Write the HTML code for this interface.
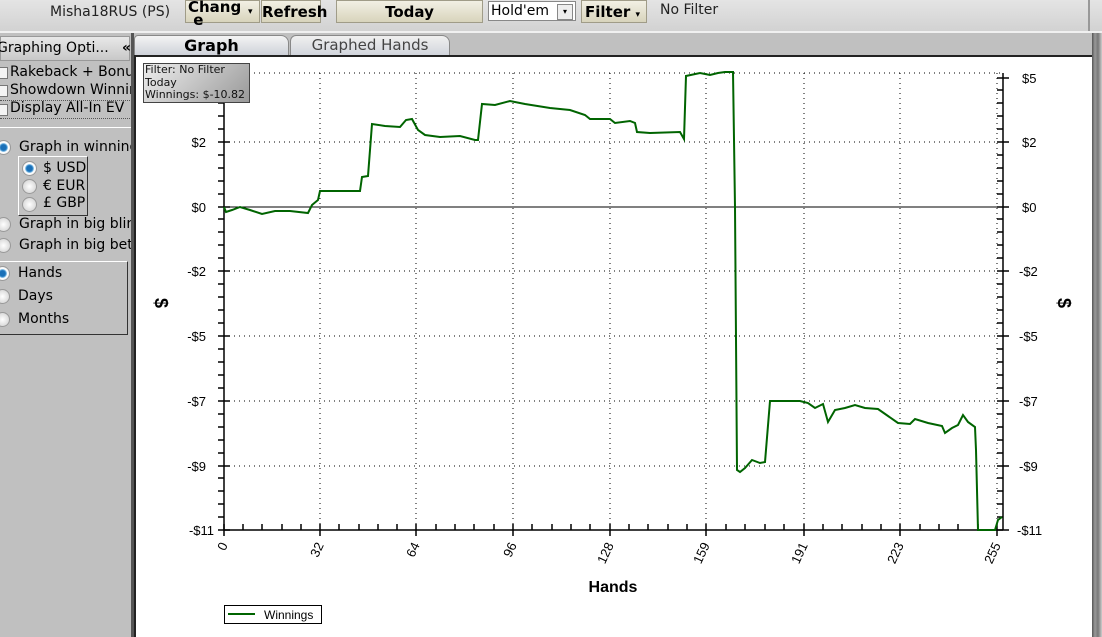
<!DOCTYPE html>
<html><head><meta charset="utf-8"><style>
body{margin:0;width:1102px;height:637px;overflow:hidden;background:#c0c0c0;font-family:"DejaVu Sans","Liberation Sans",sans-serif;position:relative}
.a{position:absolute}
.btn{position:absolute;top:0;height:23px;background:linear-gradient(#f2f0e4,#d8d4bc);border:1px solid #a09c88;font-weight:bold;font-size:15px;text-align:center;line-height:23px;color:#000;box-sizing:border-box}
.t{position:absolute;font-size:14px;color:#000;white-space:nowrap}
.rb{position:absolute;width:15px;height:15px;border-radius:50%;background:radial-gradient(#fff,#ccc);border:1px solid #999;box-sizing:border-box}
.rb.on{background:radial-gradient(#1a70b8 30%,#6ab0e0 42%,#fff 52%,#ddd)}
.cb{position:absolute;width:10px;height:10px;border:1px solid #777;background:#f4f4f4}
</style></head><body>
<div class="a" style="left:0;top:0;width:1102px;height:31px;background:linear-gradient(#e4e4e4,#d2d2d2)"></div>
<div class="t" style="left:50px;top:4px;color:#222">Misha18RUS (PS)</div>
<div class="btn" style="left:185px;width:75px;line-height:13px;text-align:left;padding-left:2px">Chang<br>&nbsp;e<span style="position:absolute;left:62px;top:5px;font-size:9px">▾</span></div>
<div class="btn" style="left:261px;width:60px">Refresh</div>
<div class="btn" style="left:336px;width:147px">Today</div>
<div class="a" style="left:488px;top:1px;width:88px;height:20px;background:#fff;border:1px solid #888;box-sizing:border-box;font-size:14px;line-height:18px;padding-left:2px">Hold'em<span style="position:absolute;right:2px;top:2px;width:14px;height:14px;border:1px solid #888;background:#eee;font-size:8px;line-height:14px;text-align:center">▾</span></div>
<div class="btn" style="left:581px;width:66px;text-align:left;padding-left:3px">Filter <span style="font-size:9px">▾</span></div>
<div class="t" style="left:660px;top:2px;color:#222">No Filter</div>
<div class="a" style="left:1088px;top:0;width:2px;height:31px;background:#999"></div>
<div class="a" style="left:0;top:31px;width:1102px;height:2px;background:#f0f0f0"></div>
<!-- left panel -->
<div class="a" style="left:0;top:36px;width:130px;height:25px;background:linear-gradient(#e8e8e8,#c8c8c8);border:1px solid #999;box-sizing:border-box"></div>
<div class="t" style="left:-3px;top:40px">Graphing Opti...&nbsp;&nbsp; <b>«</b></div>
<div class="cb" style="left:-4px;top:67px"></div><div class="t" style="left:10px;top:64px">Rakeback + Bonus</div>
<div class="cb" style="left:-4px;top:85px"></div><div class="t" style="left:10px;top:82px">Showdown Winnings</div>
<div class="a" style="left:0;top:100px;width:132px;border-top:1px dotted #555"></div>
<div class="cb" style="left:-4px;top:104px"></div><div class="t" style="left:10px;top:100px">Display All-In EV</div>
<div class="a" style="left:0;top:118px;width:132px;border-top:1px dotted #555"></div>
<div class="a" style="left:0;top:127px;width:132px;height:1px;background:#fff"></div>
<div class="rb on" style="left:-4px;top:140px"></div><div class="t" style="left:19px;top:139px">Graph in winnings</div>
<div class="a" style="left:18px;top:156px;width:68px;height:58px;border:1px solid #fff;border-right-color:#333;border-bottom-color:#333"></div>
<div class="rb on" style="left:22px;top:161px"></div><div class="t" style="left:43px;top:160px">$ USD</div>
<div class="rb" style="left:22px;top:179px"></div><div class="t" style="left:43px;top:178px">€ EUR</div>
<div class="rb" style="left:22px;top:197px"></div><div class="t" style="left:43px;top:195px">£ GBP</div>
<div class="rb" style="left:-4px;top:217px"></div><div class="t" style="left:19px;top:216px">Graph in big blinds</div>
<div class="rb" style="left:-4px;top:238px"></div><div class="t" style="left:19px;top:237px">Graph in big bets</div>
<div class="a" style="left:-2px;top:261px;width:128px;height:72px;border:1px solid #fff;border-right-color:#333;border-bottom-color:#333"></div>
<div class="rb on" style="left:-5px;top:266px"></div><div class="t" style="left:18px;top:265px">Hands</div>
<div class="rb" style="left:-5px;top:289px"></div><div class="t" style="left:18px;top:288px">Days</div>
<div class="rb" style="left:-5px;top:312px"></div><div class="t" style="left:18px;top:311px">Months</div>
<div class="a" style="left:131px;top:33px;width:3px;height:604px;background:#555"></div>
<!-- tabs -->
<div class="a" style="left:134px;top:35px;width:155px;height:21px;background:linear-gradient(#f4f4f4,#ccd0d8);border:1px solid #888;border-bottom:none;border-radius:4px 8px 0 0;box-sizing:border-box;text-align:center;font-weight:bold;font-size:16px;line-height:19px">Graph</div>
<div class="a" style="left:290px;top:35px;width:160px;height:21px;background:linear-gradient(#f0f0f0,#d0d4dc);border:1px solid #888;border-bottom:none;border-radius:6px 8px 0 0;box-sizing:border-box;text-align:center;font-size:15px;line-height:19px;color:#444">Graphed Hands</div>
<div class="a" style="left:134px;top:55px;width:960px;height:582px;background:#fff;border-top:2px solid #222;border-left:2px solid #222;box-sizing:border-box"></div>
<div class="a" style="left:1092px;top:33px;width:10px;height:604px;background:linear-gradient(90deg,#555,#999 30%,#777 60%,#ccc)"></div>
<svg class="a" style="left:0;top:0" width="1102" height="637" font-family="Liberation Sans,sans-serif">
<g stroke="#000" stroke-dasharray="1,4" stroke-width="1">
<line x1="224" y1="73" x2="1003" y2="73"/><line x1="224" y1="142" x2="1003" y2="142"/>
<line x1="224" y1="271" x2="1003" y2="271"/><line x1="224" y1="336" x2="1003" y2="336"/><line x1="224" y1="401" x2="1003" y2="401"/><line x1="224" y1="466" x2="1003" y2="466"/>
<line x1="320" y1="73" x2="320" y2="530"/><line x1="416" y1="73" x2="416" y2="530"/><line x1="513" y1="73" x2="513" y2="530"/><line x1="610" y1="73" x2="610" y2="530"/><line x1="706" y1="73" x2="706" y2="530"/><line x1="804" y1="73" x2="804" y2="530"/><line x1="900" y1="73" x2="900" y2="530"/><line x1="997" y1="73" x2="997" y2="530"/>
</g>
<g stroke="#000" stroke-width="1.5" fill="none">
<line x1="224" y1="73" x2="224" y2="530"/><line x1="1003" y1="73" x2="1003" y2="530"/><line x1="224" y1="530" x2="1003" y2="530"/><line x1="224" y1="207" x2="1003" y2="207" stroke-width="1"/>
<path id="yt" d="M218 530h12M218 517h6M218 504h6M218 491h6M218 478h6M218 466h12M218 453h6M218 440h6M218 427h6M218 414h6M218 401h12M218 388h6M218 375h6M218 362h6M218 349h6M218 336h12M218 323h6M218 310h6M218 297h6M218 284h6M218 271h12M218 258h6M218 245h6M218 232h6M218 219h6M218 207h12M218 194h6M218 181h6M218 168h6M218 155h6M218 142h12M218 129h6M218 116h6M218 103h6M218 90h6M218 78h12"/>
<use href="#yt" x="779"/>
<path d="M224 524v12M243 524v6M262 524v6M282 524v6M301 524v6M320 524v12M339 524v6M359 524v6M378 524v6M397 524v6M416 524v12M436 524v6M455 524v6M474 524v6M494 524v6M513 524v12M532 524v6M552 524v6M571 524v6M590 524v6M610 524v12M629 524v6M648 524v6M668 524v6M687 524v6M706 524v12M726 524v6M745 524v6M765 524v6M784 524v6M804 524v12M823 524v6M842 524v6M862 524v6M881 524v6M900 524v12M920 524v6M939 524v6M958 524v6M978 524v6M997 524v12"/>
</g>
<path fill="none" stroke="#006400" stroke-width="2" d="M224 207L226 212L232 210L240 207L250 210L262 214L275 211L290 211L308 213L312 205L318 200L320 191L360 191L362 177L368 176L372 124L385 126L400 127L406 120L412 119L418 130L425 135L440 137L460 136L475 140L478 140L482 104L495 105L510 101L525 104L550 108L570 110L585 115L590 119L610 119L615 123L630 121L635 123L637 132L650 133L680 132L684 139L686 76L700 73L710 75L718 73L725 72L733 72L735 207L737 470L740 472L745 468L752 460L760 463L765 462L770 401L800 401L808 403L815 408L823 404L828 422L835 410L845 408L855 405L865 408L878 409L888 416L898 423L910 424L915 419L928 423L942 426L945 433L952 428L958 425L963 415L968 422L975 427L976 450L978 530L995 530L998 520L1002 517"/>
<g font-size="13" fill="#000" text-anchor="end">
<text x="206" y="147">$2</text><text x="206" y="212">$0</text><text x="206" y="276">-$2</text><text x="206" y="341">-$5</text><text x="206" y="406">-$7</text><text x="206" y="471">-$9</text><text x="214" y="535">-$11</text>
</g>
<g font-size="13" fill="#000">
<text x="1022" y="83">$5</text><text x="1022" y="147">$2</text><text x="1022" y="212">$0</text><text x="1019" y="276">-$2</text><text x="1019" y="341">-$5</text><text x="1019" y="406">-$7</text><text x="1019" y="471">-$9</text><text x="1017" y="535">-$11</text>
</g>
<g font-size="13" fill="#000" text-anchor="end">
<text transform="translate(228,545) rotate(-65)">0</text><text transform="translate(324,545) rotate(-65)">32</text><text transform="translate(420,545) rotate(-65)">64</text><text transform="translate(517,545) rotate(-65)">96</text><text transform="translate(614,545) rotate(-65)">128</text><text transform="translate(710,545) rotate(-65)">159</text><text transform="translate(808,545) rotate(-65)">191</text><text transform="translate(904,545) rotate(-65)">223</text><text transform="translate(1001,545) rotate(-65)">255</text>
</g>
<text x="613" y="592" font-size="16" font-weight="bold" text-anchor="middle">Hands</text>
<text transform="translate(155,303) rotate(90)" font-size="18" font-weight="bold" text-anchor="middle">$</text>
<text transform="translate(1058,303) rotate(90)" font-size="18" font-weight="bold" text-anchor="middle">$</text>
<rect x="224.5" y="605.5" width="97" height="18" fill="#fff" stroke="#000"/>
<line x1="228" y1="614" x2="255" y2="614" stroke="#006400" stroke-width="2"/>
<text x="264" y="619" font-size="12">Winnings</text>
</svg>
<div class="a" style="left:143px;top:63px;width:107px;height:40px;background:linear-gradient(135deg,#eee,#999);border:1px solid #444;box-sizing:border-box;font-size:11px;line-height:12.5px;padding-left:1px;color:#111;white-space:nowrap;overflow:hidden;font-family:'DejaVu Sans',sans-serif">Filter: No Filter<br>Today<br>Winnings: $-10.82</div>
</body></html>
